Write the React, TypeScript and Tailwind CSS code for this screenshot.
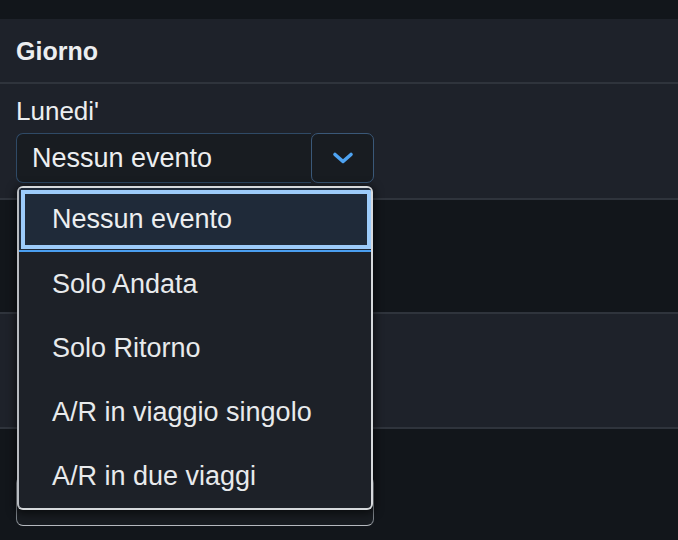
import React from "react";

const options = [
  "Nessun evento",
  "Solo Andata",
  "Solo Ritorno",
  "A/R in viaggio singolo",
  "A/R in due viaggi",
];

const Chevron = () => (
  <svg width="22" height="14" viewBox="0 0 22 14" fill="none">
    <path
      d="M3 3.5 L11 10.5 L19 3.5"
      stroke="#4ea3f2"
      strokeWidth="3.6"
      strokeLinecap="round"
      strokeLinejoin="round"
    />
  </svg>
);

const EventSelect = () => {
  const selected = 0;
  return (
    <div className="relative w-[358px] mt-[7px]">
      <div className="flex h-[50px]">
        <div className="flex-1 flex items-center pl-[15px] bg-[#181c21] border border-[#2f4a66] rounded-l-[7px] border-r-0 text-[27px] leading-[32px] text-[#eceef0]">
          {options[selected]}
        </div>
        <div className="w-[63px] flex items-center justify-center bg-[#181c21] border border-[#3a5878] rounded-[7px]">
          <Chevron />
        </div>
      </div>

      {/* open list */}
      <div className="absolute left-[1px] top-[53px] w-[356px] z-10 bg-[#1d2128] border-2 border-[#d6d9dc] border-l-[#b8bcc1] rounded-[6px] shadow-[0_2px_8px_2px_rgba(0,0,0,0.55)] overflow-hidden">
        <div className="relative h-[62px] flex items-center pl-[33px] bg-[#1f2a39] text-[27px] leading-[32px] text-[#eceef0]">
          <div className="absolute top-[2px] bottom-[1px] left-[2px] right-0 border-4 border-[#9ccbfa] pointer-events-none" />
          <span className="relative">{options[0]}</span>
        </div>
        <div className="h-[2px] bg-[#4a9ef0]" />
        {options.slice(1).map((o) => (
          <div
            key={o}
            className="h-[64px] flex items-center pl-[33px] text-[27px] leading-[32px] text-[#e8eaec]"
          >
            {o}
          </div>
        ))}
      </div>
    </div>
  );
};

export default function App() {
  return (
    <div className="min-h-[540px] bg-[#12161b] font-['Liberation_Sans',Arial,sans-serif] overflow-hidden">
      <div className="h-[19px]" />

      <div className="h-[65px] bg-[#1e222a] border-b-2 border-[#2f343c] px-4 flex items-center">
        <span className="text-[25px] leading-[30px] font-bold text-[#eceef0]">Giorno</span>
      </div>

      <div className="h-[116px] bg-[#1e222a] border-b-2 border-[#2f343c] px-4 pt-3">
        <div className="text-[26px] leading-[30px] text-[#eceef0]">Lunedi'</div>
        <EventSelect />
      </div>

      <div className="h-[114px] bg-[#12161b] border-b-2 border-[#2f343c]" />
      <div className="h-[115px] bg-[#1e222a] border-b-2 border-[#2f343c]" />

      <div className="px-4 pt-[47px]">
        <div className="w-[358px] h-[50px] rounded-[7px] border border-[#7d838a] border-b-[#b5b9be] bg-[#181c21]" />
      </div>
    </div>
  );
}
